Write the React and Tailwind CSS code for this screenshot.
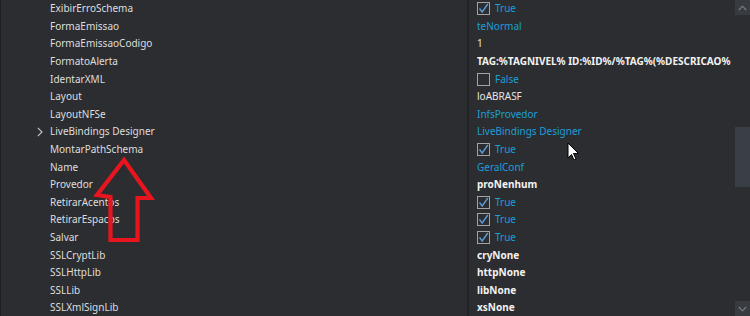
import React from "react";

const rows = [
  { n: "ExibirErroSchema", v: { t: "check", on: true } },
  { n: "FormaEmissao", v: { t: "blue", s: "teNormal" } },
  { n: "FormaEmissaoCodigo", v: { t: "plain", s: "1" } },
  { n: "FormatoAlerta", v: { t: "bold", s: "TAG:%TAGNIVEL% ID:%ID%/%TAG%(%DESCRICAO%" } },
  { n: "IdentarXML", v: { t: "check", on: false } },
  { n: "Layout", v: { t: "plain", s: "loABRASF" } },
  { n: "LayoutNFSe", v: { t: "blue", s: "InfsProvedor" } },
  { n: "LiveBindings Designer", v: { t: "blue", s: "LiveBindings Designer" }, exp: true },
  { n: "MontarPathSchema", v: { t: "check", on: true } },
  { n: "Name", v: { t: "blue", s: "GeralConf" } },
  { n: "Provedor", v: { t: "bold", s: "proNenhum" } },
  { n: "RetirarAcentos", v: { t: "check", on: true } },
  { n: "RetirarEspacos", v: { t: "check", on: true } },
  { n: "Salvar", v: { t: "check", on: true } },
  { n: "SSLCryptLib", v: { t: "bold", s: "cryNone" } },
  { n: "SSLHttpLib", v: { t: "bold", s: "httpNone" } },
  { n: "SSLLib", v: { t: "bold", s: "libNone" } },
  { n: "SSLXmlSignLib", v: { t: "bold", s: "xsNone" } },
];

function Check({ on }) {
  return (
    <span className="w-[13px] h-[13px] border border-[#a3a3a3] flex items-center justify-center shrink-0">
      {on && (
        <svg width="11" height="11" viewBox="0 0 11 11">
          <path d="M1.5 5.5 L4.2 9 L9.8 1" fill="none" stroke="#5b9bd3" strokeWidth="1.4" />
        </svg>
      )}
    </span>
  );
}

function Value({ v }) {
  if (v.t === "check")
    return (
      <div className="flex items-center gap-[5px]">
        <Check on={v.on} />
        <span className="text-[#1b9fd8]">{v.on ? "True" : "False"}</span>
      </div>
    );
  if (v.t === "blue") return <span className="text-[#1b9fd8] whitespace-nowrap">{v.s}</span>;
  if (v.t === "bold") return <span className="text-[#f2f2f2] font-bold whitespace-nowrap">{v.s}</span>;
  return <span className="text-[#e6e6e6]">{v.s}</span>;
}

export default function App() {
  return (
    <div
      className="relative w-[750px] h-[316px] overflow-hidden bg-[#2c2d31] flex text-[10px]"
      style={{ fontFamily: '"Noto Sans", "Open Sans", sans-serif' }}
    >
      <div className="w-[1px] bg-[#1e1f22] shrink-0" />
      <div className="flex-1 flex overflow-hidden">
        <div className="w-[466px] shrink-0 flex flex-col">
          {rows.map((r) => (
            <div key={r.n} className="h-[17.6px] shrink-0 flex items-center text-[#dedede]">
              <div className="w-[49px] shrink-0 flex justify-end pr-[7px]">
                {r.exp && (
                  <svg width="6" height="10" viewBox="0 0 6 10">
                    <path d="M0.8 0.8 L5 5 L0.8 9.2" fill="none" stroke="#c8c8c8" strokeWidth="1.1" />
                  </svg>
                )}
              </div>
              <span className="whitespace-nowrap">{r.n}</span>
            </div>
          ))}
        </div>
        <div className="w-[2px] bg-[#222327] shrink-0" />
        <div className="flex-1 flex flex-col pl-[8px] overflow-hidden">
          {rows.map((r) => (
            <div key={r.n} className="h-[17.6px] shrink-0 flex items-center overflow-hidden">
              <Value v={r.v} />
            </div>
          ))}
        </div>
      </div>
      <div className="w-[15px] shrink-0 flex flex-col bg-[#2c2d31]">
        <div className="h-[15px] bg-[#383b40] flex items-center justify-center">
          <svg width="9" height="6" viewBox="0 0 9 6">
            <path d="M0.8 5 L4.5 1.2 L8.2 5" fill="none" stroke="#7d8187" strokeWidth="1.1" />
          </svg>
        </div>
        <div className="h-[112px]" />
        <div className="h-[60px] bg-[#3a3f46]" />
        <div className="flex-1" />
        <div className="h-[15px] bg-[#383b40] flex items-center justify-center">
          <svg width="9" height="6" viewBox="0 0 9 6">
            <path d="M0.8 1 L4.5 4.8 L8.2 1" fill="none" stroke="#7d8187" strokeWidth="1.1" />
          </svg>
        </div>
      </div>
      <svg className="absolute left-0 top-0 pointer-events-none" width="750" height="316" viewBox="0 0 750 316">
        <path
          d="M124 160 L151 198 L137.5 198 L137.5 240 L110.5 240 L110.5 197 L97 195 Z"
          fill="none"
          stroke="#e8151f"
          strokeWidth="4.2"
          strokeLinejoin="miter"
        />
        <path
          d="M568 143 L568 158 L571.5 154.5 L574 160 L576 159 L573.5 153.5 L578.5 153.5 Z"
          fill="#ffffff"
          stroke="#000000"
          strokeWidth="1"
          strokeLinejoin="round"
        />
      </svg>
    </div>
  );
}
